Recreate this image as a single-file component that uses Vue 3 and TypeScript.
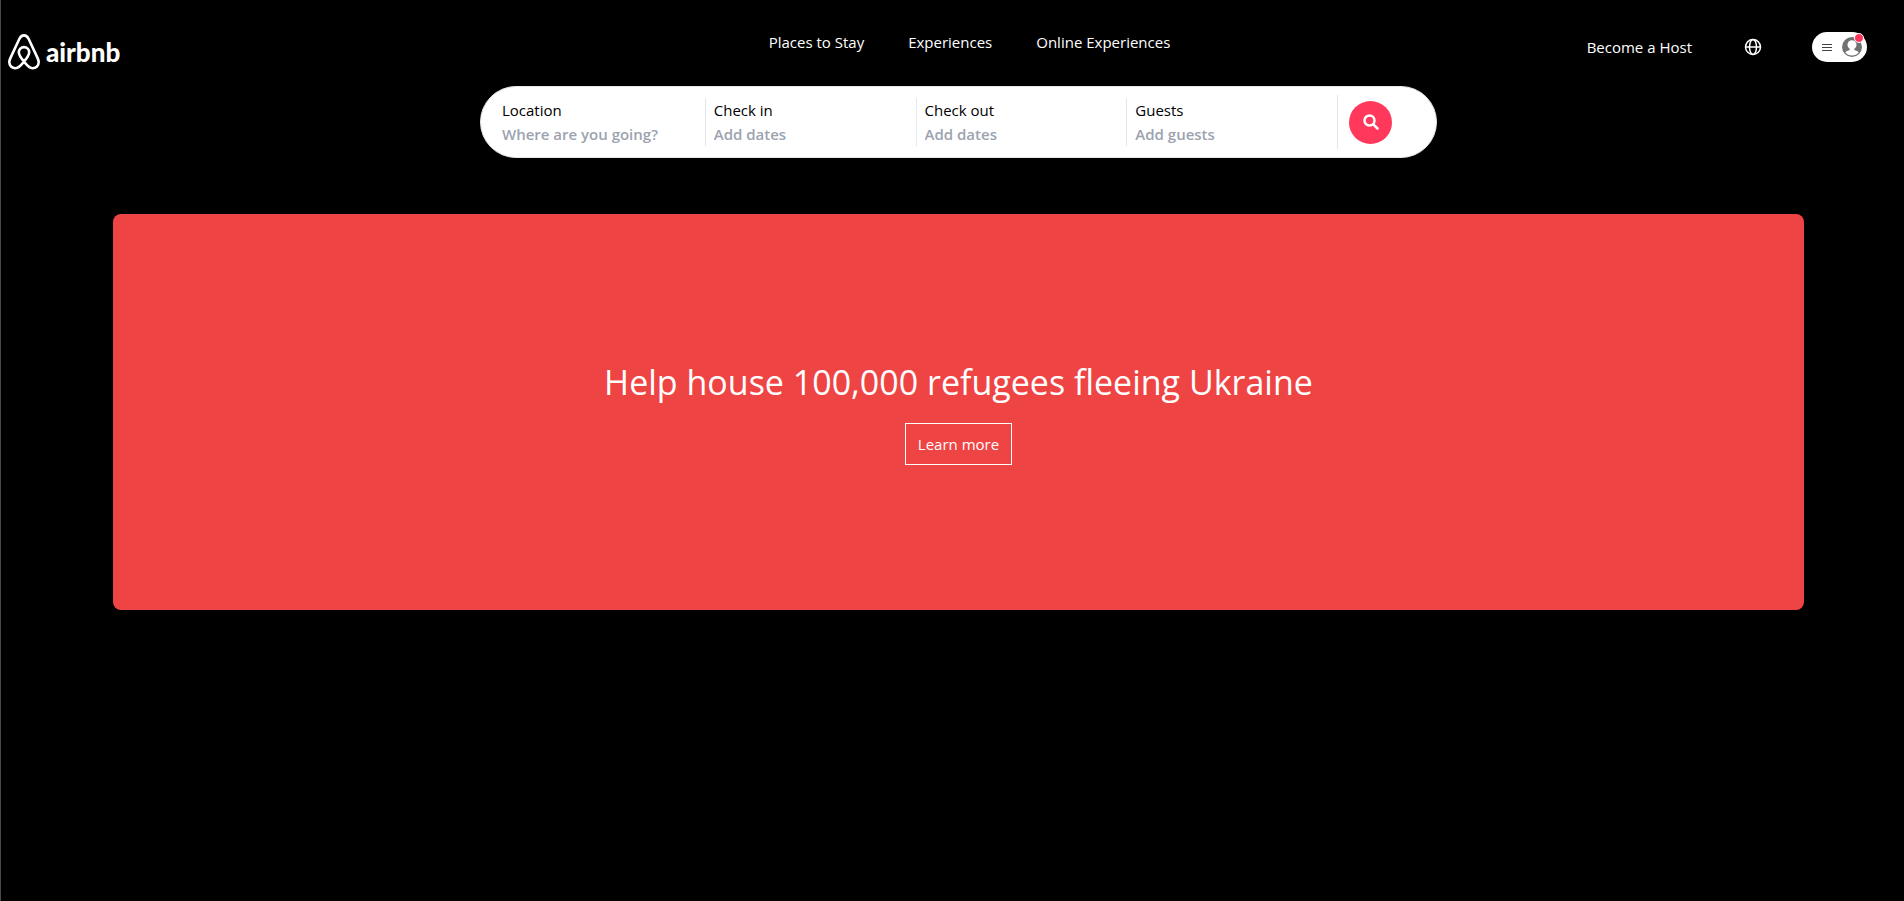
<script setup lang="ts">
interface NavLink {
  label: string
  href: string
}

interface SearchField {
  id: string
  label: string
  placeholder: string
}

const links: NavLink[] = [
  { label: 'Places to Stay', href: '#stays' },
  { label: 'Experiences', href: '#experiences' },
  { label: 'Online Experiences', href: '#online' },
]

const fields: SearchField[] = [
  { id: 'location', label: 'Location', placeholder: 'Where are you going?' },
  { id: 'check-in', label: 'Check in', placeholder: 'Add dates' },
  { id: 'check-out', label: 'Check out', placeholder: 'Add dates' },
  { id: 'guests', label: 'Guests', placeholder: 'Add guests' },
]
</script>

<template>
  <div class="page">
    <header class="header">
      <a class="logo" href="#home" aria-label="airbnb home">
        <svg class="logo-mark" viewBox="0 0 32 36" aria-hidden="true">
          <path
            d="M16 27.6c-3.400-4-5.200-6.900-5.200-9.300a5.200 5.200 0 0 1 10.400 0c0 2.400-1.800 5.300-5.200 9.300zc-3.200 4.500-5.900 6.600-8.600 6.600-3.500 0-6.100-2.600-6.100-6.100 0-1.500.5-2.800 1.300-4.500L11.300 5C12.500 2.500 13.800 1.400 16 1.400S19.500 2.500 20.700 5l8.700 18.600c.8 1.700 1.300 3 1.300 4.500 0 3.500-2.600 6.100-6.100 6.100-2.700 0-5.400-2.100-8.600-6.600z"
          />
        </svg>
        <span class="logo-word">airbnb</span>
      </a>
      <nav class="nav" aria-label="Main">
        <a v-for="link in links" :key="link.href" :href="link.href">{{ link.label }}</a>
      </nav>
      <div class="account">
        <a class="host" href="#host">Become a Host</a>
        <button class="globe" type="button" aria-label="Choose a language">
          <svg viewBox="0 0 18 18" aria-hidden="true">
            <circle cx="9" cy="9" r="7.500" />
            <ellipse cx="9" cy="9" rx="3.500" ry="7.500" />
            <path d="M1.500 9h15" />
          </svg>
        </button>
        <button class="profile" type="button" aria-label="Account menu">
          <svg class="burger" viewBox="0 0 10 9" aria-hidden="true">
            <path d="M0 1.500h10M0 4.500h10M0 7.500h10" />
          </svg>
          <svg class="avatar" viewBox="0 0 20 20" aria-hidden="true">
            <circle cx="10" cy="10" r="10" fill="#717171" />
            <path
              d="M10 3.200c-2.700 0-4.500 2-4.500 4.500 0 1.800.8 3.100 2.200 4v1.200c-1.900.5-3.600 1.200-4.500 2.400A8.500 8.500 0 0 0 10 18.500a8.500 8.500 0 0 0 6.800-3.200c-.9-1.200-2.600-1.900-4.500-2.400v-1.200c1.400-.9 2.200-2.200 2.200-4 0-2.500-1.800-4.500-4.500-4.500z"
              fill="#fff"
            />
          </svg>
          <span class="dot"></span>
        </button>
      </div>
    </header>

    <div class="content">
      <form class="search" role="search" @submit.prevent>
        <div v-for="field in fields" :key="field.id" class="field">
          <label :for="field.id">{{ field.label }}</label>
          <input :id="field.id" type="text" :placeholder="field.placeholder" autocomplete="off" />
        </div>
        <div class="submit">
          <button type="submit" aria-label="Search">
            <svg viewBox="0 0 16 16" aria-hidden="true">
              <circle cx="6.500" cy="6.500" r="5" />
              <path d="M10.300 10.300l4.200 4.200" />
            </svg>
          </button>
        </div>
      </form>

      <main class="banner">
        <h1>Help house 100,000 refugees fleeing Ukraine</h1>
        <button type="button">Learn more</button>
      </main>
    </div>
  </div>
</template>

<style>
body {
  margin: 0;
  background: #000;
}
</style>

<style scoped>
.page {
  box-sizing: border-box;
  min-height: 100vh;
  border-left: 1px solid #4a4744;
  background: #000;
  color: #fff;
  font-family: 'Segoe UI', 'Open Sans', 'Noto Sans', sans-serif;
  font-size: 15px;
  line-height: 24px;
}

a {
  color: inherit;
  text-decoration: none;
}

button,
input {
  font: inherit;
}

.header {
  display: grid;
  grid-template-columns: 761fr auto 697fr;
  align-items: start;
  box-sizing: border-box;
  height: 86px;
  padding: 30px 37px 0 7px;
}

.logo {
  display: flex;
  align-items: center;
  gap: 6px;
  height: 44px;
}

.logo-mark {
  width: 32px;
  height: 36px;
  fill: none;
  stroke: #fff;
  stroke-width: 2.600;
  stroke-linejoin: round;
}

.logo-word {
  font-family: Lato, sans-serif;
  font-size: 26px;
  font-weight: 900;
  line-height: 36px;
}

.nav {
  display: flex;
  gap: 44px;
}

.account {
  display: flex;
  align-items: center;
  justify-content: flex-end;
  height: 34px;
}

.globe {
  display: flex;
  margin: 0 50px 0 52px;
  padding: 0;
  border: 0;
  background: none;
}

.globe svg {
  width: 18px;
  height: 18px;
  fill: none;
  stroke: #fff;
  stroke-width: 1.500;
}

.profile {
  position: relative;
  display: flex;
  align-items: center;
  justify-content: space-between;
  width: 55px;
  height: 30px;
  padding: 0 5px 0 10px;
  border: 0;
  border-radius: 15px;
  background: #fff;
}

.burger {
  width: 10px;
  height: 9px;
  stroke: #444;
  stroke-width: 1;
}

.avatar {
  width: 20px;
  height: 20px;
}

.dot {
  position: absolute;
  top: 1px;
  right: 3px;
  width: 8px;
  height: 8px;
  border: 1px solid #fff;
  border-radius: 50%;
  background: #ff385c;
}

.content {
  padding: 0 100px 0 112px;
}

.search {
  display: grid;
  grid-template-columns: repeat(4, 211fr) 85fr;
  align-items: center;
  box-sizing: border-box;
  width: 56.6%;
  height: 72px;
  margin: 0 auto;
  padding: 0 14px 0 13px;
  border: 1px solid #e5e7eb;
  border-radius: 36px;
  background: #fff;
}

.field {
  display: flex;
  flex-direction: column;
  min-width: 0;
  padding: 0 8px;
}

.field + .field {
  border-left: 1px solid #e5e7eb;
}

.field label {
  color: #000;
  font-weight: 500;
}

.field input {
  width: 100%;
  height: 24px;
  padding: 0;
  border: 0;
  outline: 0;
  background: none;
  color: #000;
  font-weight: 600;
}

.field input::placeholder {
  color: #9ca3af;
  opacity: 1;
}

.submit {
  display: flex;
  align-items: center;
  height: 54px;
  padding-left: 11px;
  border-left: 1px solid #e5e7eb;
}

.submit button {
  display: flex;
  align-items: center;
  justify-content: center;
  width: 43px;
  height: 43px;
  padding: 0;
  border: 0;
  border-radius: 50%;
  background: #ff385c;
}

.submit svg {
  width: 16px;
  height: 16px;
  fill: none;
  stroke: #fff;
  stroke-width: 2.500;
  stroke-linecap: round;
}

.banner {
  display: flex;
  flex-direction: column;
  align-items: center;
  justify-content: center;
  gap: 21px;
  box-sizing: border-box;
  height: 396px;
  margin-top: 56px;
  padding-top: 2px;
  border-radius: 8px;
  background: #ef4444;
}

.banner h1 {
  margin: 0;
  font-size: 34px;
  font-weight: 400;
  line-height: 40px;
}

.banner button {
  height: 42px;
  padding: 0 12px;
  border: 1px solid #fff;
  background: none;
  color: #fff;
}
</style>
